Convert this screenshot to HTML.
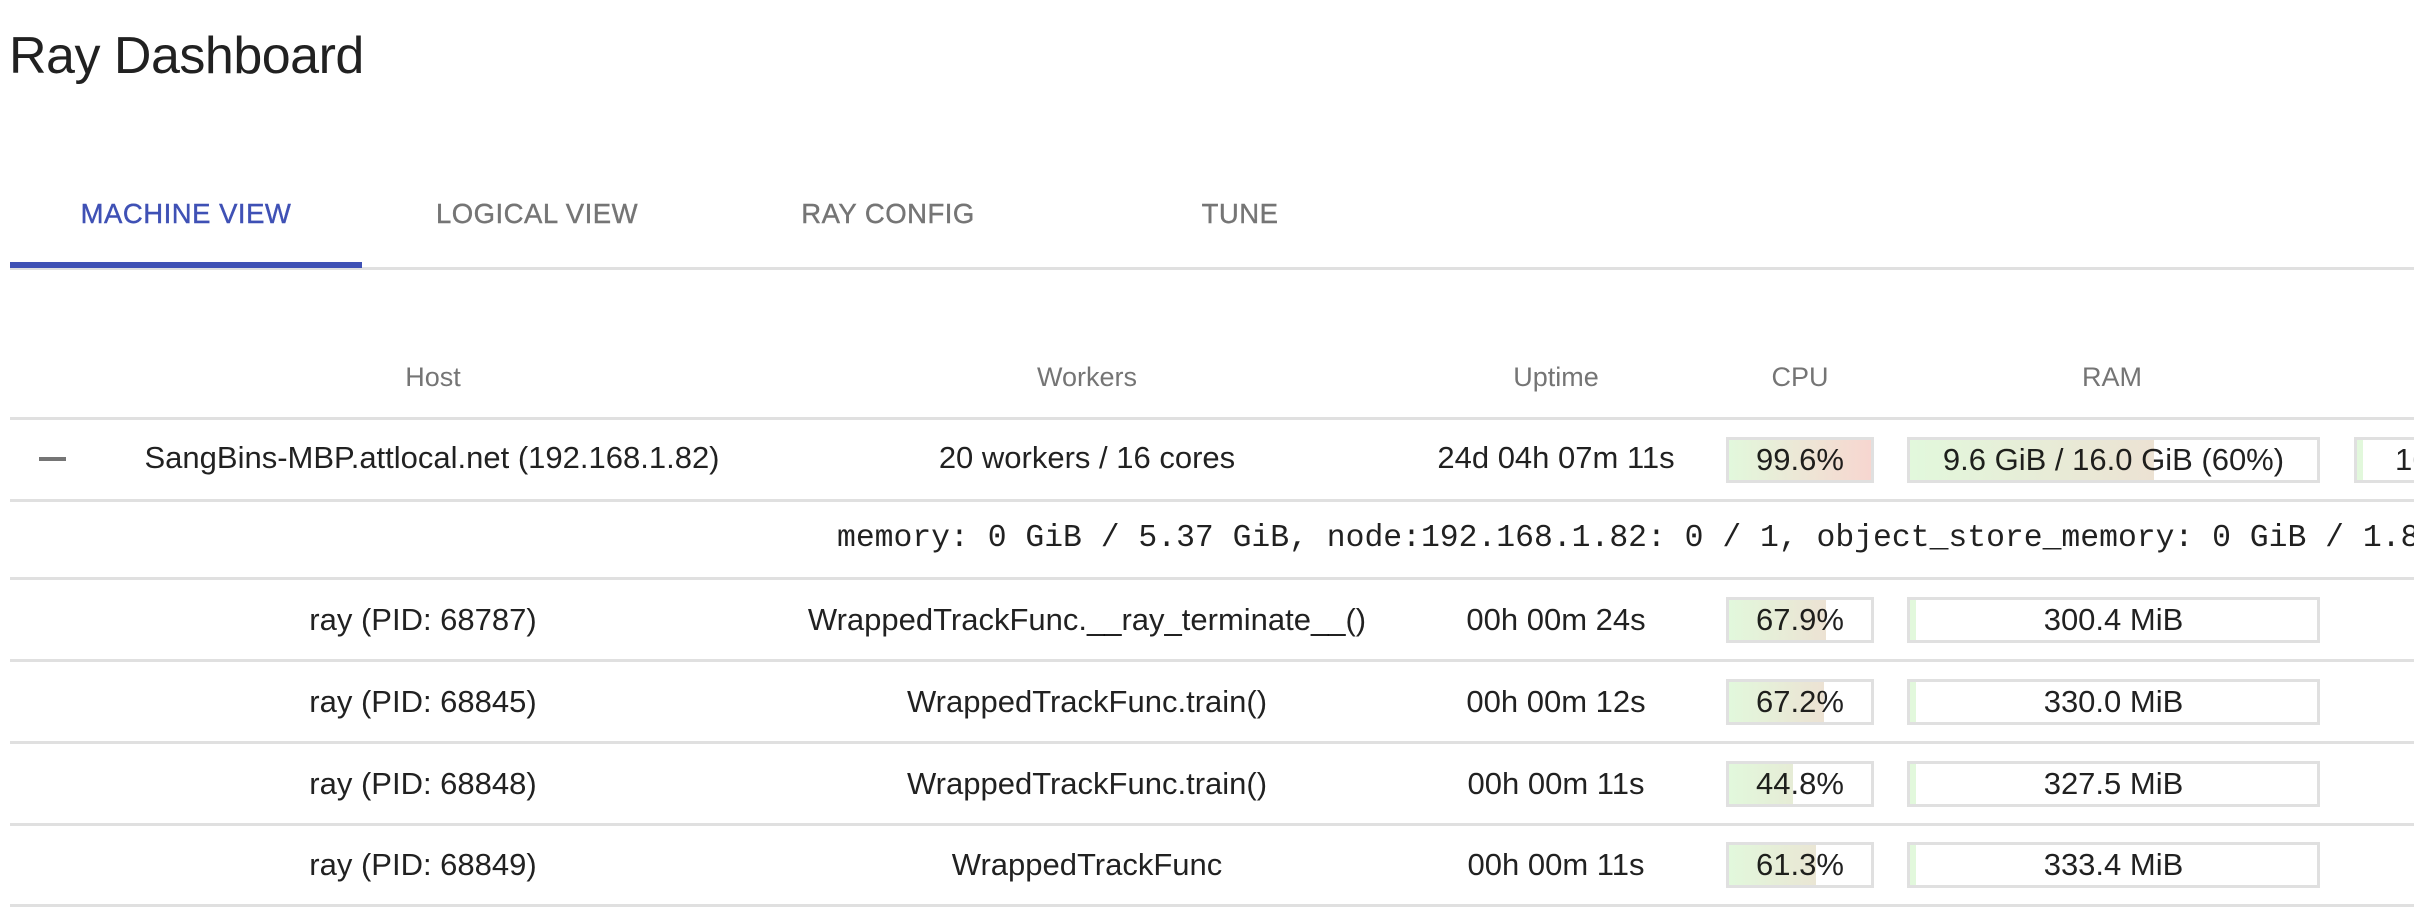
<!DOCTYPE html>
<html><head><meta charset="utf-8"><style>
*{margin:0;padding:0;box-sizing:border-box}
body{width:2414px;height:918px;overflow:hidden;background:#fff;font-family:"Liberation Sans",sans-serif;color:rgba(0,0,0,.87);position:relative}
.a{position:absolute;white-space:nowrap}
.c{transform:translateX(-50%)}
.title{left:9px;top:26px;font-size:52px;letter-spacing:-0.5px}
.tab{top:198px;font-size:27.5px;font-weight:500;color:#757575;letter-spacing:0.5px;-webkit-text-stroke:0.4px #757575}
.hd{top:362px;font-size:27px;color:#757575}
.ln{position:absolute;left:10px;right:0;height:3px;background:#e0e0e0}
.t{font-size:31px}
.box{position:absolute;border:3px solid #e0e0e0;height:46px;font-size:31px;text-align:center;line-height:40px;overflow:hidden}
.fill{position:absolute;left:0;top:0;bottom:0}
.box span{position:relative}
</style></head><body>
<div class="a title">Ray Dashboard</div>
<div class="a tab c" style="left:186px;color:#3f51b5;-webkit-text-stroke:0.4px #3f51b5">MACHINE VIEW</div>
<div class="a tab c" style="left:537px">LOGICAL VIEW</div>
<div class="a tab c" style="left:888px">RAY CONFIG</div>
<div class="a tab c" style="left:1240px">TUNE</div>
<div class="a" style="left:10px;top:267px;right:0;height:3px;background:#e0e0e0"></div>
<div class="a" style="left:10px;top:262px;width:352px;height:6px;background:#3f51b5"></div>

<div class="a hd c" style="left:433px">Host</div>
<div class="a hd c" style="left:1087px">Workers</div>
<div class="a hd c" style="left:1556px">Uptime</div>
<div class="a hd c" style="left:1800px">CPU</div>
<div class="a hd c" style="left:2112px">RAM</div>

<div class="ln" style="top:417px"></div>
<div class="ln" style="top:499px"></div>
<div class="ln" style="top:577px"></div>
<div class="ln" style="top:659px"></div>
<div class="ln" style="top:741px"></div>
<div class="ln" style="top:823px"></div>
<div class="ln" style="top:904px"></div>

<div class="a" style="left:39px;top:457px;width:27px;height:4px;background:#757575"></div>
<div class="a t c" style="left:432px;top:440px">SangBins-MBP.attlocal.net (192.168.1.82)</div>
<div class="a t c" style="left:1087px;top:440px">20 workers / 16 cores</div>
<div class="a t c" style="left:1556px;top:440px">24d 04h 07m 11s</div>
<div class="box" style="left:1726px;top:437px;width:148px"><div class="fill" style="width:100%;background:linear-gradient(90deg,#e2f8dc,#f7d6d0)"></div><span>99.6%</span></div>
<div class="box" style="left:1907px;top:437px;width:413px"><div class="fill" style="width:60%;background:linear-gradient(90deg,#e2f8dc,#ece2d3)"></div><span>9.6 GiB / 16.0 GiB (60%)</span></div>
<div class="box" style="left:2354px;top:437px;width:120px;text-align:left"><div class="fill" style="width:6px;background:#e2f8dc"></div><span style="left:38px">16.0 GiB</span></div>

<div class="a" style="top:521px;font-family:'Liberation Mono',monospace;font-size:31.4px;left:837px">memory: 0 GiB / 5.37 GiB, node:192.168.1.82: 0 / 1, object_store_memory: 0 GiB / 1.86 GiB</div>

<div class="a t c" style="left:423px;top:602px">ray (PID: 68787)</div>
<div class="a t c" style="left:1087px;top:602px">WrappedTrackFunc.__ray_terminate__()</div>
<div class="a t c" style="left:1556px;top:602px">00h 00m 24s</div>
<div class="box" style="left:1726px;top:597px;width:148px"><div class="fill" style="width:68%;background:linear-gradient(90deg,#e2f8dc,#ece2d3)"></div><span>67.9%</span></div>
<div class="box" style="left:1907px;top:597px;width:413px"><div class="fill" style="width:6px;background:#e2f8dc"></div><span>300.4 MiB</span></div>

<div class="a t c" style="left:423px;top:684px">ray (PID: 68845)</div>
<div class="a t c" style="left:1087px;top:684px">WrappedTrackFunc.train()</div>
<div class="a t c" style="left:1556px;top:684px">00h 00m 12s</div>
<div class="box" style="left:1726px;top:679px;width:148px"><div class="fill" style="width:67%;background:linear-gradient(90deg,#e2f8dc,#ece2d3)"></div><span>67.2%</span></div>
<div class="box" style="left:1907px;top:679px;width:413px"><div class="fill" style="width:6px;background:#e2f8dc"></div><span>330.0 MiB</span></div>

<div class="a t c" style="left:423px;top:766px">ray (PID: 68848)</div>
<div class="a t c" style="left:1087px;top:766px">WrappedTrackFunc.train()</div>
<div class="a t c" style="left:1556px;top:766px">00h 00m 11s</div>
<div class="box" style="left:1726px;top:761px;width:148px"><div class="fill" style="width:45%;background:linear-gradient(90deg,#e2f8dc,#e6ecd6)"></div><span>44.8%</span></div>
<div class="box" style="left:1907px;top:761px;width:413px"><div class="fill" style="width:6px;background:#e2f8dc"></div><span>327.5 MiB</span></div>

<div class="a t c" style="left:423px;top:847px">ray (PID: 68849)</div>
<div class="a t c" style="left:1087px;top:847px">WrappedTrackFunc</div>
<div class="a t c" style="left:1556px;top:847px">00h 00m 11s</div>
<div class="box" style="left:1726px;top:842px;width:148px"><div class="fill" style="width:61%;background:linear-gradient(90deg,#e2f8dc,#eae6d4)"></div><span>61.3%</span></div>
<div class="box" style="left:1907px;top:842px;width:413px"><div class="fill" style="width:6px;background:#e2f8dc"></div><span>333.4 MiB</span></div>
</body></html>
